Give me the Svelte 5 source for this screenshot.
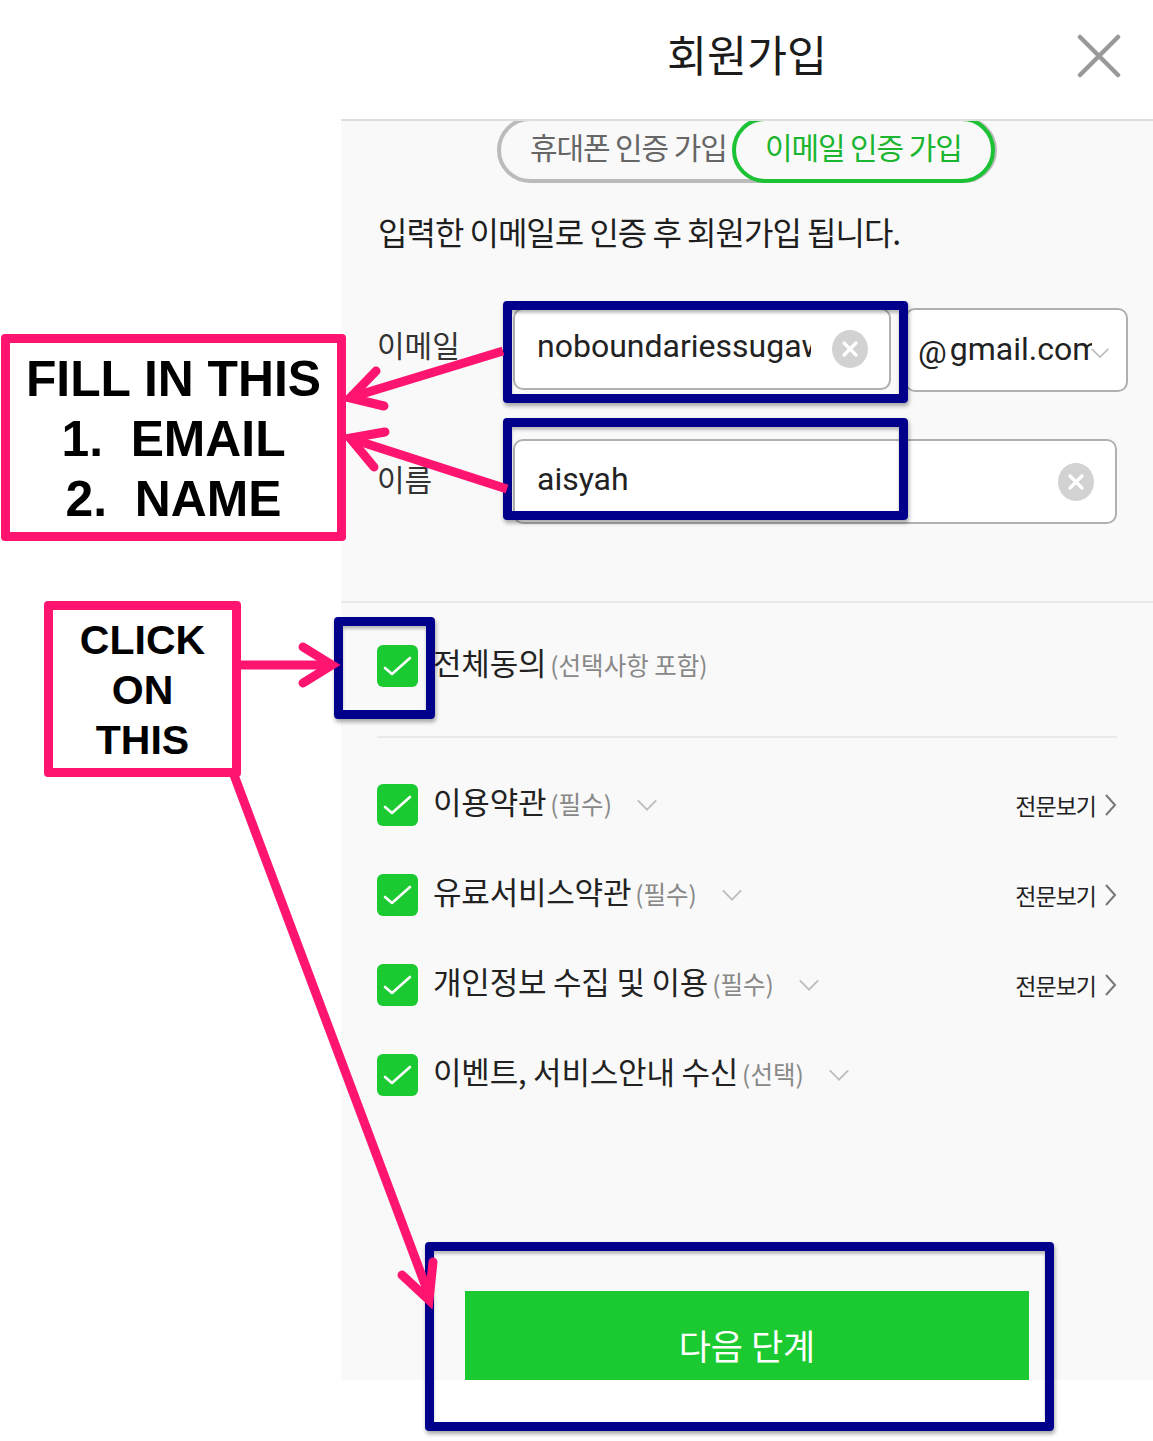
<script>
  const terms = [
    { title: '이용약관', sub: '(필수)', more: true },
    { title: '유료서비스약관', sub: '(필수)', more: true },
    { title: '개인정보 수집 및 이용', sub: '(필수)', more: true },
    { title: '이벤트, 서비스안내 수신', sub: '(선택)', more: false }
  ];
  const arrows = [
    { line: 'M503 351 L352 397', head: 'M376 371 L350 398 L384 406' },
    { line: 'M507 489 L352 439', head: 'M385 432 L350 438 L374 467' },
    { line: 'M238 665 L328 665', head: 'M303 647 L332 665 L303 683' },
    { line: 'M234 775 L429 1295', head: 'M402 1275 L429 1300 L433 1262' }
  ];
</script>

{#snippet check()}
  <span class="check">
    <svg viewBox="0 0 41 42" width="41" height="42"><path d="M8 23 L15 29 L33 13" fill="none" stroke="#fff" stroke-width="2.6" stroke-linecap="round" stroke-linejoin="round" /></svg>
  </span>
{/snippet}

{#snippet clear()}
  <svg class="clear" viewBox="0 0 36 38" width="36" height="38"><ellipse cx="18" cy="19" rx="18" ry="19" fill="#d2d2d2" /><path d="M12 13 L24 25 M24 13 L12 25" stroke="#fff" stroke-width="3.200" stroke-linecap="round" /></svg>
{/snippet}

{#snippet chevron()}
  <svg class="chev" viewBox="0 0 24 14" width="22" height="14"><path d="M2 2 L12 12 L22 2" fill="none" stroke="#bdbdbd" stroke-width="2" /></svg>
{/snippet}

<div class="page">
  <div class="panel">
    <header class="head">
      <h1>회원가입</h1>
      <svg class="close" viewBox="0 0 44 44" width="44" height="44"><path d="M3 3 L41 41 M41 3 L3 41" stroke="#999" stroke-width="4.500" stroke-linecap="round" /></svg>
    </header>
    <main class="main">
      <div class="tabs">
        <div class="tab">휴대폰 인증 가입</div>
        <div class="tab on">이메일 인증 가입</div>
      </div>
      <p class="intro">입력한 이메일로 인증 후 회원가입 됩니다.</p>

      <div class="field email">
        <span class="label">이메일</span>
        <div class="box addr"><span class="val">noboundariessugaw</span>{@render clear()}</div>
        <div class="box domain"><span class="at">@</span><span class="dom">gmail.com</span>{@render chevron()}</div>
      </div>
      <div class="field name">
        <span class="label">이름</span>
        <div class="box full"><span class="val">aisyah</span>{@render clear()}</div>
      </div>

      <div class="agree">
        <div class="row all">
          {@render check()}
          <span class="title">전체동의</span><span class="sub">(선택사항 포함)</span>
        </div>
        <div class="list">
          {#each terms as t}
            <div class="row">
              {@render check()}
              <span class="title">{t.title}</span><span class="sub">{t.sub}</span>{@render chevron()}
              {#if t.more}
                <span class="more">전문보기<svg viewBox="0 0 13 24" width="13" height="24"><path d="M2 2 L11 12 L2 22" fill="none" stroke="#777" stroke-width="2" /></svg></span>
              {/if}
            </div>
          {/each}
        </div>
      </div>
      <button class="next">다음 단계</button>
    </main>
  </div>

  <div class="note fill">FILL IN THIS<br />1.&nbsp; EMAIL<br />2.&nbsp; NAME</div>
  <div class="note click">CLICK<br />ON<br />THIS</div>
  <div class="mark m1"></div>
  <div class="mark m2"></div>
  <div class="mark m3"></div>
  <div class="mark m4"></div>
  <svg class="arrows" viewBox="0 0 1153 1441" width="1153" height="1441">
    {#each arrows as a}
      <path d={a.line} fill="none" stroke="#ff1470" stroke-width="9" />
      <path d={a.head} fill="none" stroke="#ff1470" stroke-width="9" stroke-linecap="round" stroke-linejoin="miter" />
    {/each}
  </svg>
</div>

<style>
  :global(body) { margin: 0; background: #fff; }
  .page { position: relative; width: 1153px; height: 1441px; overflow: hidden; background: #fff; font-family: Roboto, "Noto Sans CJK KR", sans-serif; color: #222; }
  .panel { margin-left: 341px; width: 812px; height: 1380px; display: flex; flex-direction: column; background: #f9f9f9; }
  .head { height: 119px; flex: none; background: #fff; border-bottom: 2px solid #dedede; display: flex; align-items: center; justify-content: center; position: relative; }
  h1 { margin: 0 0 13px; font-size: 43.500px; font-weight: 400; color: #1c1c1c; font-family: "Noto Sans CJK KR", sans-serif; }
  .close { position: absolute; right: 32px; top: 34px; }
  .main { flex: 1; min-height: 0; overflow: hidden; display: flex; flex-direction: column; font-family: "Noto Sans CJK KR", sans-serif; }
  .tabs { flex: none; box-sizing: border-box; width: 500px; height: 66px; margin: -4px 0 0 156px; border: 4px solid #bbb; border-radius: 34px; display: flex; align-items: stretch; }
  .tab { flex: 1; min-width: 0; font-size: 30px; letter-spacing: -1.100px; color: #666; display: flex; align-items: center; padding: 0 0 8px 29px; white-space: nowrap; }
  .tab.on { flex: none; box-sizing: border-box; width: 263px; margin: -4px -2px -4px 0; padding-left: 29px; border: 4px solid #1bc233; border-radius: 34px; color: #1bb52f; background: #f9f9f9; }
  .intro { margin: 24px 0 0 37px; font-size: 32px; letter-spacing: -1px; line-height: 48px; color: #1e1e1e; white-space: nowrap; }
  .field { display: flex; position: relative; }
  .label { font-size: 30px; color: #333; width: 172px; padding-left: 36px; box-sizing: border-box; flex: none; line-height: 44px; }
  .box { box-sizing: border-box; background: #fff; border: 2px solid #b0b0b0; border-radius: 10px; display: flex; align-items: center; font-family: Roboto, "Noto Sans CJK KR", sans-serif; flex: none; }
  .email { margin-top: 53px; height: 84px; }
  .email .label { padding-top: 14px; }
  .addr { width: 378px; height: 82px; padding: 0 21px 0 22px; }
  .val { font-size: 32px; color: #222; white-space: nowrap; overflow: hidden; padding-bottom: 6px; }
  .addr .val { width: 274px; margin-right: auto; padding-bottom: 6px; }
  .domain { width: 223px; height: 84px; margin-left: 14px; padding: 0 0 2px 11px; position: relative; font-size: 32px; overflow: hidden; }
  .at { font-size: 32px; margin-right: 3px; padding-top: 6px; }
  .dom { width: 142px; overflow: hidden; white-space: nowrap; }
  .domain .chev { position: absolute; right: 16px; top: 36px; width: 20px; }
  .name { margin-top: 47px; height: 85px; }
  .name .label { padding-top: 17px; }
  .full { width: 604px; height: 85px; padding: 0 21px 0 22px; justify-content: space-between; }
  .clear { flex: none; }
  .agree { margin-top: 77px; border-top: 2px solid #e9e9e9; padding: 0 36px; flex: none; }
  .row { display: flex; align-items: center; height: 42px; white-space: nowrap; }
  .all { margin-top: 42px; padding-bottom: 49px; height: 42px; box-sizing: content-box; border-bottom: 2px solid #e9e9e9; }
  .list { display: flex; flex-direction: column; gap: 48px; margin-top: 46px; }
  .check { width: 41px; height: 42px; background: #1bca30; border-radius: 6px; flex: none; display: block; margin-right: 15px; }
  .check svg { display: block; }
  .title { font-size: 31px; color: #222; margin-bottom: 9px; letter-spacing: -.2px; }
  .sub { font-size: 24.500px; color: #888; margin-left: 4px; margin-bottom: 3px; }
  .row .chev { margin-left: 24px; }
  .more { margin-left: auto; font-size: 23px; letter-spacing: -1px; color: #222; display: flex; align-items: center; gap: 8px; }
  .next { flex: none; margin: auto 0 0 124px; width: 564px; height: 89px; border: 0; padding: 18px 0 0; background: #1bca30; color: #fff; font-size: 35px; font-family: "Noto Sans CJK KR", sans-serif; }

  .note { position: absolute; box-sizing: border-box; border: 9px solid #ff1470; border-radius: 4px; background: #fff; color: #000; font-family: "Liberation Sans", Arial, sans-serif; font-weight: 700; text-align: center; }
  .fill { left: 1px; top: 334px; width: 345px; height: 207px; font-size: 49.800px; line-height: 60px; padding-top: 6px; }
  .click { left: 44px; top: 601px; width: 197px; height: 176px; font-size: 41px; line-height: 50px; padding-top: 5px; }
  .mark { position: absolute; box-sizing: border-box; border: 9px solid #00008b; border-radius: 4px; box-shadow: 1px 3px 4px rgba(0,0,0,.35), inset 0 3px 3px rgba(0,0,0,.25); }
  .m1 { left: 503px; top: 301px; width: 405px; height: 102px; }
  .m2 { left: 503px; top: 418px; width: 405px; height: 102px; }
  .m3 { left: 334px; top: 617px; width: 101px; height: 102px; }
  .m4 { left: 425px; top: 1242px; width: 629px; height: 189px; }
  .arrows { position: absolute; left: 0; top: 0; pointer-events: none; }
</style>
